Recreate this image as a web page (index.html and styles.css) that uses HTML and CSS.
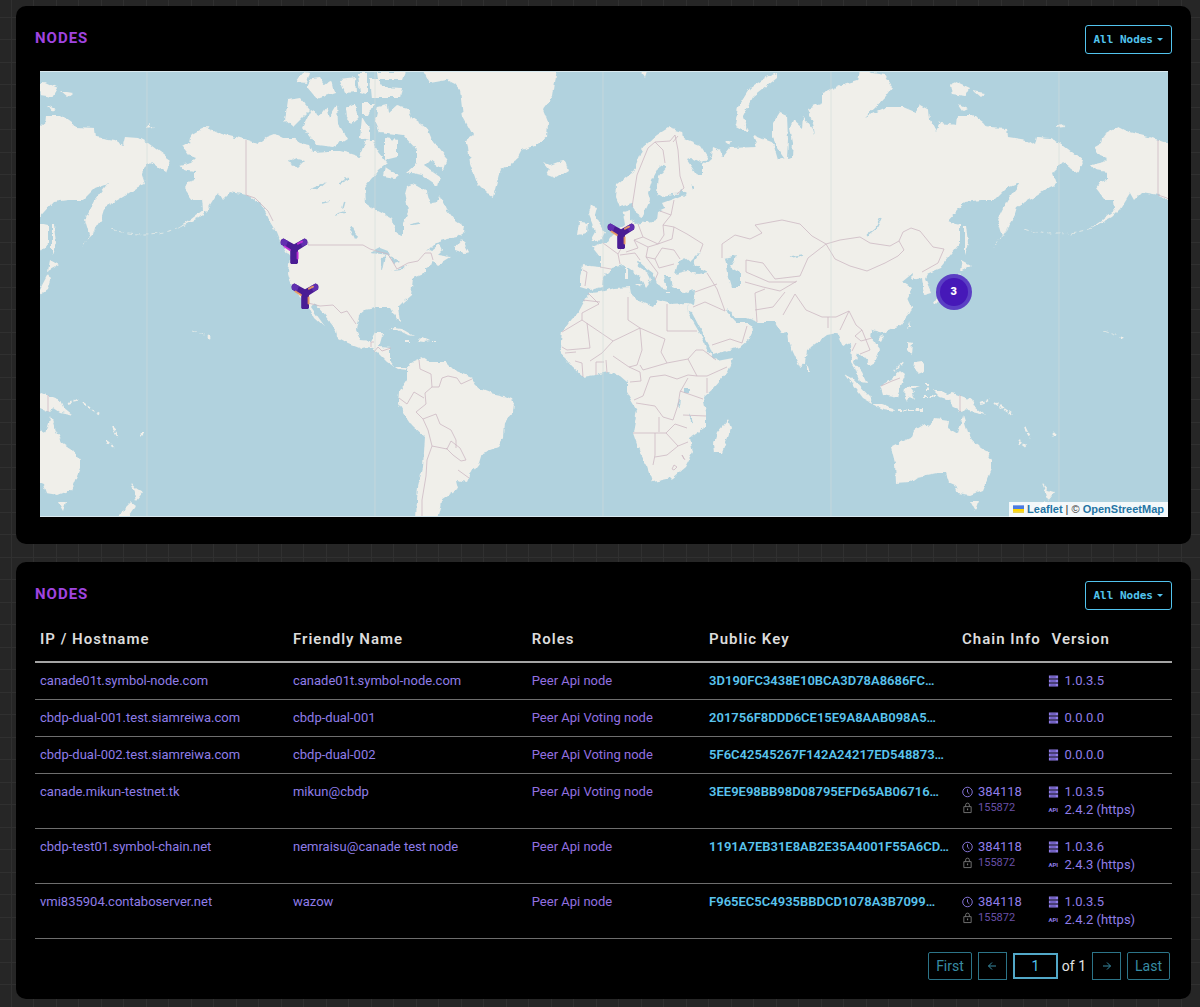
FILE: index.html
```html
<!DOCTYPE html>
<html lang="en">
<head>
<meta charset="utf-8">
<meta name="viewport" content="width=device-width, initial-scale=1">
<title>Nodes</title>
<link rel="stylesheet" href="styles.css">
</head>
<body>
<svg class="sprite" aria-hidden="true">
  <symbol id="server" viewBox="0 0 12 12"><path d="M1 0h10v3.2H1zM1 4.4h10v3.2H1zM1 8.8h10V12H1z" fill="currentColor"/><path d="M2.5 1.6h6M2.5 6h6M2.5 10.4h6" stroke="#2a1c60" stroke-width=".6"/></symbol>
  <symbol id="clock" viewBox="0 0 12 12"><circle cx="6" cy="6" r="5.2" fill="none" stroke="currentColor"/><path d="M6 3v3.2l2 1.8" fill="none" stroke="currentColor"/></symbol>
  <symbol id="lock" viewBox="0 0 12 12"><path d="M2 4.500h8v6.500H2zM4 4.500v-2q0-1.800 2-1.800t2 1.800v2" fill="none" stroke="currentColor"/><path d="M5.400 6.500h1.300v2H5.400z" fill="currentColor"/></symbol>
  <symbol id="pin" viewBox="0 0 28 27">
    <path d="M0.500 5.500Q0 1.800 3.500 1L14 6.800 24.500 1Q28 1.800 27.500 5.500L27 7 18 12.800V25.200L17 26.500H11L10.200 25.200V12.800L1 7Z" fill="#4a1c94"/>
    <path d="M1 5Q0.800 2 3.500 1L8 3.500 6 9 1 7ZM27 5Q27.200 2 24.500 1L20 3.500 22 9 27 7Z" fill="#6230b0"/>
    <path d="M4.500 9 9.800 12.400M18 6.200 22 4.200M17.600 15V21" fill="none" stroke="currentColor" stroke-width="2" stroke-linecap="round" opacity=".9"/>
  </symbol>
</svg>
<main class="page">
  <section class="card">
    <header class="card-head">
      <h2>NODES</h2>
      <button class="filter" type="button">All Nodes<span class="caret"></span></button>
    </header>
    <div class="map">
      <svg class="world" viewBox="40 71 1128 446" role="img" aria-label="World map">
        <defs>
          <filter id="coast" filterUnits="userSpaceOnUse" x="0" y="40" width="1200" height="500"><feTurbulence type="fractalNoise" baseFrequency=".16" numOctaves="2" seed="4"/><feDisplacementMap in="SourceGraphic" scale="5" xChannelSelector="R" yChannelSelector="G"/></filter>
          <g id="land" fill="#f0efea">
            <!-- North and Central America -->
            <path d="M182 147 189 143 190 138 193 134 200 130 207 127 217 132 233 136 247 140 258 144 267 137 275 134 283 138 293 138 300 143 310 145 313 152 330 151 340 151 348 153 360 157 365 140 373 140 378 152 387 163 378 170 373 177 367 184 364 188 365 203 372 208 380 212 393 219 394 227 397 233 403 235 403 223 408 213 407 203 405 193 407 186 412 184 417 186 427 192 429 200 432 203 438 202 440 195 447 210 455 220 465 227 464 232 457 237 447 239 437 242 427 252 433 249 440 244 443 250 438 255 450 257 437 265 434 262 425 268 425 273 413 278 412 287 411 295 403 302 398 307 400 322 397 320 393 313 390 308 375 308 365 310 359 315 356 330 361 340 371 341 375 333 383 333 379 347 391 348 391 362 395 367 405 367 407 370 398 369 387 362 377 352 368 347 361 348 348 343 337 337 336 330 323 313 314 303 311 307 326 328 314 317 308 305 300 296 293 287 290 280 288 273 290 257 280 242 276 232 270 222 267 215 260 203 247 195 230 192 222 200 218 193 208 209 200 217 177 229 190 220 203 210 202 200 193 200 184 188 188 182 195 180 195 172 183 170 179 165 192 162 196 158 188 155Z"/>
            <path d="M288 100 300 98 310 110 302 118 293 127 285 120ZM311 110 320 115 326 107 329 118 337 105 338 123 347 138 333 147 317 145 303 127ZM295 82 303 72 310 73 307 83ZM307 87 312 78 320 77 325 85 332 80 335 93 317 99ZM340 80 355 78 356 92 345 93ZM358 73 367 73 367 95 360 93ZM370 78 377 78 383 87 402 88 400 98 372 98ZM377 72 406 72 403 80 378 80ZM345 108 355 103 358 120 352 125 346 118ZM362 103 374 103 368 115 362 115ZM362 117 370 130 370 140 360 138ZM378 107 387 105 388 112 396 105 408 108 412 118 427 128 433 142 447 158 443 170 430 160 424 166 440 177 438 186 422 175 407 172 417 163 417 150 403 135 380 132 375 120ZM385 138 397 140 397 157 385 160ZM385 167 398 175 393 179 383 177ZM455 248 462 239 469 252 465 253 455 250ZM389 330 395 328 402 329 414 336 408 335 398 330ZM417 341 421 337 430 341 424 342ZM405 340h5v2h-5zM433 340h4v1h-4z"/>
            <!-- Greenland and Iceland -->
            <path d="M422 68 430 83 447 80 455 84 460 90 463 117 473 135 466 140 468 147 470 163 477 183 487 193 493 197 497 182 500 170 510 165 516 161 522 150 535 146 547 137 548 123 543 110 553 97 557 68ZM543 162 550 165 558 162 565 161 568 170 555 178 547 175 550 170Z"/>
            <!-- South America -->
            <path d="M407 370 411 363 423 358 429 362 446 362 454 370 471 377 477 388 490 393 504 396 513 400 515 403 514 412 505 422 504 437 498 447 482 453 479 463 470 475 467 482 457 480 459 488 448 495 441 500 440 508 437 520 416 520 417 500 418 487 423 467 425 437 412 425 404 413 398 403 399 392 407 380Z"/>
            <!-- Europe and Asia -->
            <path d="M580 278 582 265 600 267 600 257 592 247 602 243 607 242 612 235 618 230 625 225 623 212 630 210 630 220 637 224 657 220 658 212 665 209 662 203 673 199 687 193 673 194 662 196 657 193 659 177 667 167 660 165 652 180 648 193 650 200 647 207 642 217 637 215 633 203 620 207 616 197 617 185 633 172 643 147 657 135 668 128 682 132 683 138 700 145 708 157 703 163 692 158 687 160 697 175 703 175 703 165 712 157 713 147 720 150 723 157 730 148 757 147 753 135 763 139 773 143 778 160 785 158 778 148 773 137 773 123 780 112 787 115 788 140 787 158 792 157 793 143 790 127 793 120 802 128 803 117 813 130 815 137 813 123 807 108 823 102 823 93 840 85 857 80 860 66 872 73 885 75 892 87 885 97 875 108 865 117 888 107 903 107 915 112 920 105 929 110 930 120 936 131 940 123 957 125 958 115 973 115 983 122 988 128 1007 129 1008 137 1027 140 1035 145 1037 137 1050 138 1060 143 1072 152 1083 160 1078 173 1063 162 1053 172 1057 184 1050 187 1035 197 1017 207 1013 220 1002 237 997 220 1007 200 1020 183 1007 188 995 200 980 200 965 202 947 222 960 225 960 243 940 268 928 273 925 279 931 293 924 295 922 278 912 280 913 273 902 282 912 288 907 297 912 308 910 313 900 325 883 333 872 330 870 337 880 350 875 362 870 365 863 357 857 353 854 363 862 372 867 383 860 382 855 368 852 363 851 343 843 347 837 333 827 335 807 350 805 363 800 367 793 352 788 340 787 332 782 333 775 322 758 322 747 318 735 318 728 308 727 312 737 323 748 323 753 330 748 340 740 347 713 355 710 347 692 313 688 312 687 303 693 305 695 290 683 292 672 287 670 277 664 277 667 289 660 287 657 283 653 273 645 267 637 260 638 266 648 273 651 279 645 287 640 277 630 270 623 265 612 268 603 277 602 287 590 290 580 287Z"/>
            <path d="M590 205 597 207 595 215 605 233 602 239 590 241 595 232 592 223 588 213ZM580 222 588 223 587 233 578 235ZM777 73 777 78 753 97 743 117 748 132 735 125 738 107 750 88 767 77ZM950 85 957 82 970 88 965 97 952 95ZM973 91 985 93 980 97ZM959 105 967 109 963 111ZM1056 128 1061 124 1066 127ZM725 142 731 141 729 145ZM641 71h6l-2 6zM964 225 966 225 968 243 964 255ZM962 260 971 265 960 271ZM960 274 962 280 959 290 952 295 940 300 936 305 933 303 938 296 952 289ZM625 268h3v12h-3zM635 284h7l-1 4zM663 292h7v1h-7zM685 292l6-2-3 3zM807 364 810 372 807 372Z"/>
            <!-- Africa -->
            <path d="M590 293 600 292 615 288 630 287 632 298 642 302 653 307 657 300 670 304 687 303 688 313 695 325 702 337 706 348 713 357 717 361 733 358 727 373 714 388 703 398 706 412 706 427 690 438 693 452 685 467 672 478 653 482 648 467 640 453 633 433 637 410 627 393 627 382 620 376 608 372 595 375 583 377 572 367 565 358 560 348 562 332 571 320 578 313 585 300ZM728 420 731 428 722 453 715 453 714 443 717 433Z"/>
            <!-- Islands of south-east Asia and Oceania -->
            <path d="M910 322 911 327 908 329ZM880 336 883 337 881 341 878 339ZM908 342 913 343 912 355 908 350ZM915 362 922 361 924 372 919 374 914 370ZM845 374 852 378 870 397 872 403 863 398ZM872 404 882 404 893 408 895 411 882 409ZM880 385 892 378 900 371 905 375 900 387 897 398 883 395ZM906 388 911 386 920 386 911 389 914 393 912 393 914 400 910 396 907 403 905 397ZM933 390 942 390 947 395 953 393 972 400 975 407 985 415 972 412 966 408 962 412 953 408 950 400 940 397ZM891 447 912 437 915 430 925 424 932 425 935 418 949 420 948 428 958 434 963 416 968 432 973 442 985 450 992 460 992 468 983 490 970 495 958 493 955 485 948 482 945 473 937 473 917 477 910 482 896 483 895 463ZM970 502 978 502 975 511ZM1042 483 1048 490 1055 492 1048 501 1046 493ZM1044 502 1048 505 1036 522 1024 522Z"/>
            <path d="M898 410H923M980 404 985 402 990 399M995 403 1013 415M1025 427 1030 437M1018 441 1026 447M927 383V391M923 396H936M903 362 895 371" fill="none" stroke="#f0efea" stroke-width="2" stroke-dasharray="4 1.500"/>
            <path d="M192 331 206 336M1008 229 993 248M112 229C130 236 160 236 182 227" fill="none" stroke="#f0efea" stroke-opacity=".7" stroke-dasharray="5 3"/>
            <circle cx="1054" cy="434" r="1.500"/><circle cx="209" cy="337" r="1.500"/>
          </g>
          <g id="water" fill="#b1d2de">
            <path d="M678 263 684 257 690 262 700 252 693 264 708 272 698 274 687 271 675 274ZM725 258 737 255 730 267 740 273 740 287 732 287 728 273ZM684 389h5v4h-5zM370 253 380 248 388 251 390 255 380 254ZM382 257 386 256 383 271 381 270ZM389 256 396 259 400 262 394 264ZM392 271 402 268 410 264 402 270ZM288 162 297 158 305 160 298 167ZM308 190 315 187 326 182 318 189ZM349 227 352 226 358 237 355 240ZM410 148 415 146 414 153ZM681 189 687 193 683 196 679 194ZM690 182 695 188 693 191Z"/>
            <path d="M881 218 876 228 867 235M680 400 679 408M690 414 692 423M340 183 348 179M345 201 343 208M335 215 345 212M322 203 330 201M410 225 420 223M790 257 803 255" fill="none" stroke="#b1d2de" stroke-width="1.500"/>
          </g>
          <g id="borders" fill="none" stroke="#cdb9c3" stroke-width=".8">
            <path d="M246 140V195L255 198 262 205 268 211 273 221M308 242V245H363L370 249 380 252 388 254 397 269 408 263 418 261 425 253 431 253 433 260M308 303 320 306 333 305 341 313 347 311 356 324M371 347V342H374M374 352 378 347 382 351 391 348"/>
            <path d="M419 360 420 369 431 374 432 387 425 393 426 404 416 412 423 419 436 414 440 424 451 430 456 440 456 448M432 387 439 387 442 378 448 376 457 378 461 384 472 379M399 398 407 404 414 392 424 398M423 419 428 430 432 446 447 449 451 441 460 448 466 460 461 461 453 455 446 448M458 470 469 478M432 446 427 460 426 476 422 500 422 517"/>
            <path d="M583 300 600 302M588 293 599 304 582 313 582 320 562 332M582 320 613 341 640 328 628 320 628 297M587 323 590 348 567 350 562 347M613 341 602 353 590 361M640 328 642 350 637 365 629 367 613 356M640 328 665 339M667 304V331H697M665 339 661 352 667 363 643 370 640 365M667 363 688 359 697 376 707 376 727 367M688 359 696 350 703 350 716 360M697 376 688 375 677 379 665 375 650 377 643 396 634 400M630 382 641 381 640 372 629 367M636 403 655 406 663 417 673 420 678 405 680 392 688 378M680 391 703 399M683 415 706 416M633 433H666L675 424 687 428M655 433V455L653 465M666 433 678 446 688 442M655 457 667 455 678 446M659 417V432M607 373 606 360M596 375V362H604M583 377 582 363 575 361M565 353 576 352M684 459 682 455 685 460M672 469 674 465 677 467 674 470ZM707 378V393"/>
            <path d="M583 270 587 272 585 286M600 267 611 269M603 243 618 254 620 264M618 254 622 247 620 234M638 224 643 237 634 240 638 248 626 252M643 237 658 244 664 235 663 225 671 215 660 211M671 215 674 200M634 240 648 247 658 244 672 239 674 227 663 225M674 227 687 234 703 244 700 252M648 247 646 257 655 259 662 248 674 250 680 259M655 259 659 268 674 264M646 257 658 273 655 280M620 255 635 253 640 260M632 207 637 175 648 148 655 142 663 150 665 163M655 142 670 141 675 135 678 150 680 176 684 188 677 194M673 142 678 136"/>
            <path d="M722 258 722 244 735 235 750 239 762 233 755 225 782 220 800 224 812 236 826 244 840 240 860 237 870 243 890 246 899 241 903 232 911 228 920 231 933 247 944 249 938 263 922 272M826 244 808 258 800 276 775 279 763 263 746 260 746 272 769 282 796 282M745 282 763 287 780 291 797 281M826 244 835 259 850 266 867 271 885 263 898 256 904 250 899 241M757 322 755 293 765 289M755 310 773 307 785 292M783 315 795 294 806 310 822 317 836 317 849 311 856 325 862 330 855 336 861 341 872 338M828 328V317M849 311 840 330M707 273 717 289 725 311M695 292 717 284M693 307 705 302 725 311M712 345 730 339 742 343 747 326M856 343 852 351M862 330 870 350 860 354M881 386 892 381 900 378M960 395V412"/>
          </g>
        </defs>
        <rect x="40" y="71" width="1128" height="446" fill="#b1d2de"/>
        <g filter="url(#coast)"><use href="#land"/><use href="#land" x="-912"/><use href="#land" x="912"/><use href="#water"/></g>
        <g><use href="#borders"/><use href="#borders" x="-912"/><use href="#borders" x="912"/></g>
        <path d="M147 71V517M375 71V517M603 71V517M831 71V517M1059 71V517" stroke="#d3dcda" stroke-opacity=".6"/>
        <path d="M40 71.500H1168M40 516.500H1168" stroke="#d9eaf0"/>
      </svg>
      <button class="marker seattle" type="button" aria-label="Node"><svg><use href="#pin"/></svg></button>
      <button class="marker angeles amber" type="button" aria-label="Node"><svg><use href="#pin"/></svg></button>
      <button class="marker europe amber" type="button" aria-label="Node"><svg><use href="#pin"/></svg></button>
      <button class="cluster" type="button"><span>3</span></button>
      <div class="credit">
        <svg viewBox="0 0 12 8" aria-hidden="true"><path d="M0 0h12v4H0z" fill="#4c7be1"/><path d="M0 4h12v3H0z" fill="#ffd500"/><path d="M0 7h12v1H0z" fill="#e0bc00"/></svg>
        <a href="#">Leaflet</a> | © <a href="#">OpenStreetMap</a>
      </div>
    </div>
  </section>

  <section class="card">
    <header class="card-head">
      <h2>NODES</h2>
      <button class="filter" type="button">All Nodes<span class="caret"></span></button>
    </header>
    <table class="nodes">
      <colgroup><col class="c-host"><col class="c-name"><col class="c-role"><col class="c-key"><col class="c-chain"><col class="c-version"></colgroup>
      <thead><tr><th>IP / Hostname</th><th>Friendly Name</th><th>Roles</th><th>Public Key</th><th>Chain Info</th><th>Version</th></tr></thead>
      <tbody>
        <tr><td>canade01t.symbol-node.com</td><td>canade01t.symbol-node.com</td><td class="role">Peer Api node</td><td><a href="#">3D190FC3438E10BCA3D78A8686FC…</a></td><td></td><td><div class="info"><svg><use href="#server"/></svg>1.0.3.5</div></td></tr>
        <tr><td>cbdp-dual-001.test.siamreiwa.com</td><td>cbdp-dual-001</td><td class="role">Peer Api Voting node</td><td><a href="#">201756F8DDD6CE15E9A8AAB098A5…</a></td><td></td><td><div class="info"><svg><use href="#server"/></svg>0.0.0.0</div></td></tr>
        <tr><td>cbdp-dual-002.test.siamreiwa.com</td><td>cbdp-dual-002</td><td class="role">Peer Api Voting node</td><td><a href="#">5F6C42545267F142A24217ED548873…</a></td><td></td><td><div class="info"><svg><use href="#server"/></svg>0.0.0.0</div></td></tr>
        <tr><td>canade.mikun-testnet.tk</td><td>mikun@cbdp</td><td class="role">Peer Api Voting node</td><td><a href="#">3EE9E98BB98D08795EFD65AB06716…</a></td><td><div class="info"><svg><use href="#clock"/></svg>384118</div><div class="info final"><svg><use href="#lock"/></svg>155872</div></td><td><div class="info"><svg><use href="#server"/></svg>1.0.3.5</div><div class="info"><span class="api">API</span>2.4.2 (https)</div></td></tr>
        <tr><td>cbdp-test01.symbol-chain.net</td><td>nemraisu@canade test node</td><td class="role">Peer Api node</td><td><a href="#">1191A7EB31E8AB2E35A4001F55A6CD…</a></td><td><div class="info"><svg><use href="#clock"/></svg>384118</div><div class="info final"><svg><use href="#lock"/></svg>155872</div></td><td><div class="info"><svg><use href="#server"/></svg>1.0.3.6</div><div class="info"><span class="api">API</span>2.4.3 (https)</div></td></tr>
        <tr><td>vmi835904.contaboserver.net</td><td>wazow</td><td class="role">Peer Api node</td><td><a href="#">F965EC5C4935BBDCD1078A3B7099…</a></td><td><div class="info"><svg><use href="#clock"/></svg>384118</div><div class="info final"><svg><use href="#lock"/></svg>155872</div></td><td><div class="info"><svg><use href="#server"/></svg>1.0.3.5</div><div class="info"><span class="api">API</span>2.4.2 (https)</div></td></tr>
      </tbody>
    </table>
    <nav class="pager" aria-label="Pages">
      <button type="button">First</button>
      <button class="step" type="button" aria-label="Previous"><svg viewBox="0 0 10 10"><path d="M9 5H1.500M5 1.500 1.500 5 5 8.500" fill="none" stroke="currentColor"/></svg></button>
      <label class="pos"><input type="text" value="1" aria-label="Page">of 1</label>
      <button class="step" type="button" aria-label="Next"><svg viewBox="0 0 10 10"><path d="M1 5H8.500M5 1.500 8.500 5 5 8.500" fill="none" stroke="currentColor"/></svg></button>
      <button type="button">Last</button>
    </nav>
  </section>
</main>
</body>
</html>
```
FILE: styles.css
```css
* { box-sizing: border-box; }

body {
  margin: 0;
  font: 13px/18px Roboto, sans-serif;
  color: #8f7de8;
  background-color: #262626;
  background-image:
    linear-gradient(#303030 1px, transparent 1px, transparent 22px, #303030 22px, #303030 23px, transparent 23px),
    linear-gradient(90deg, #303030 1px, transparent 1px, transparent 22px, #303030 22px, #303030 23px, transparent 23px);
  background-size: 45px 45px;
  background-position: 11px 17px;
}

button, input { font: inherit; }
button { cursor: pointer; }
a { text-decoration: none; }
.sprite { display: none; }

.page {
  display: flex;
  flex-direction: column;
  gap: 18px;
  padding: 6px 9px 9px 16px;
}

.card {
  padding: 19px;
  border-radius: 10px;
  background: #000;
}

.card-head {
  display: flex;
  align-items: flex-start;
  justify-content: space-between;
}

h2 {
  margin: 0;
  font-size: 15px;
  line-height: 26px;
  font-weight: 700;
  letter-spacing: 1px;
  color: #a044e0;
}

.filter {
  display: flex;
  align-items: center;
  gap: 4px;
  height: 29px;
  padding: 0 8px 0 7px;
  border: 1px solid #52c4ee;
  border-radius: 3px;
  background: #000;
  color: #52c4ee;
  font: bold 11px/16px "DejaVu Sans Mono", monospace;
}

.caret {
  border: 3px solid transparent;
  border-top-color: currentColor;
  border-bottom: 0;
}

.map {
  position: relative;
  margin: 17px 4px 8px 5px;
  overflow: hidden;
}

.world {
  display: block;
  width: 100%;
}

.marker, .cluster {
  position: absolute;
  padding: 0;
  border: 0;
  background: none;
  transform: translate(-50%, -50%);
}

.marker {
  width: 28px;
  height: 27px;
  color: #c42fd8;
}

.marker svg { display: block; width: 28px; height: 27px; }
.amber { color: #f0a062; }
.seattle { left: 22.500%; top: 40.400%; }
.angeles { left: 23.500%; top: 50.500%; }
.europe { left: 51.500%; top: 37%; }

.cluster {
  left: 81%;
  top: 49.600%;
  width: 36px;
  height: 36px;
  padding: 4px;
  border-radius: 50%;
  background: #5b3fc4;
  color: #fff;
  font-weight: 900;
  font-size: 11px;
  line-height: 28px;
}

.cluster span {
  display: block;
  border-radius: 50%;
  background: #4618b8;
}

.credit {
  position: absolute;
  right: 0;
  bottom: 0;
  padding: 0 4px;
  background: rgba(255, 255, 255, .85);
  color: #333;
  font: 11px/15px "Liberation Sans", sans-serif;
}

.credit svg { width: 11px; height: 8px; }
.credit a { color: #2474a4; font-weight: 700; }

.nodes {
  width: 100%;
  margin-top: 7px;
  border-collapse: collapse;
  table-layout: fixed;
}

.c-host, .c-key { width: 22.250%; }
.c-name { width: 21%; }
.c-role { width: 15.600%; }
.c-chain { width: 7.600%; }

th {
  height: 45px;
  padding: 0 5px;
  border-bottom: 2px solid #a4a4a4;
  color: #dcdcdc;
  font-size: 15px;
  font-weight: 600;
  letter-spacing: 1px;
  text-align: left;
  white-space: nowrap;
}

th:last-child { padding-left: 8px; }

td {
  padding: 9px 5px;
  border-bottom: 1px solid #6e6e6e;
  vertical-align: top;
  white-space: nowrap;
}

td a {
  color: #5ac4ee;
  font-weight: 600;
}

.role { color: #9370e0; }

.info {
  display: flex;
  align-items: center;
  gap: 5px;
}

.info svg { width: 11px; height: 12px; }

.final {
  color: #6950a8;
  font-size: 11px;
  line-height: 14px;
}

.final svg { color: #777; }

.api {
  width: 11px;
  font-size: 6px;
  font-weight: 700;
}

.pager {
  display: flex;
  justify-content: flex-end;
  gap: 6px;
  margin: 13px 2px 0 0;
  font-size: 14px;
}

.pager button {
  height: 28px;
  padding: 0 7px;
  border: 1px solid #2c7488;
  border-radius: 2px;
  background: #000;
  color: #388ca4;
}

.pager .step { width: 29px; border-radius: 0; }
.step svg { width: 10px; height: 10px; }

.pos {
  display: flex;
  align-items: center;
  gap: 4px;
  color: #e4e4e4;
}

.pos input {
  width: 45px;
  height: 26px;
  padding: 0;
  border: 2px solid #52a8c8;
  background: #000;
  color: #52c4ee;
  text-align: center;
}
```
